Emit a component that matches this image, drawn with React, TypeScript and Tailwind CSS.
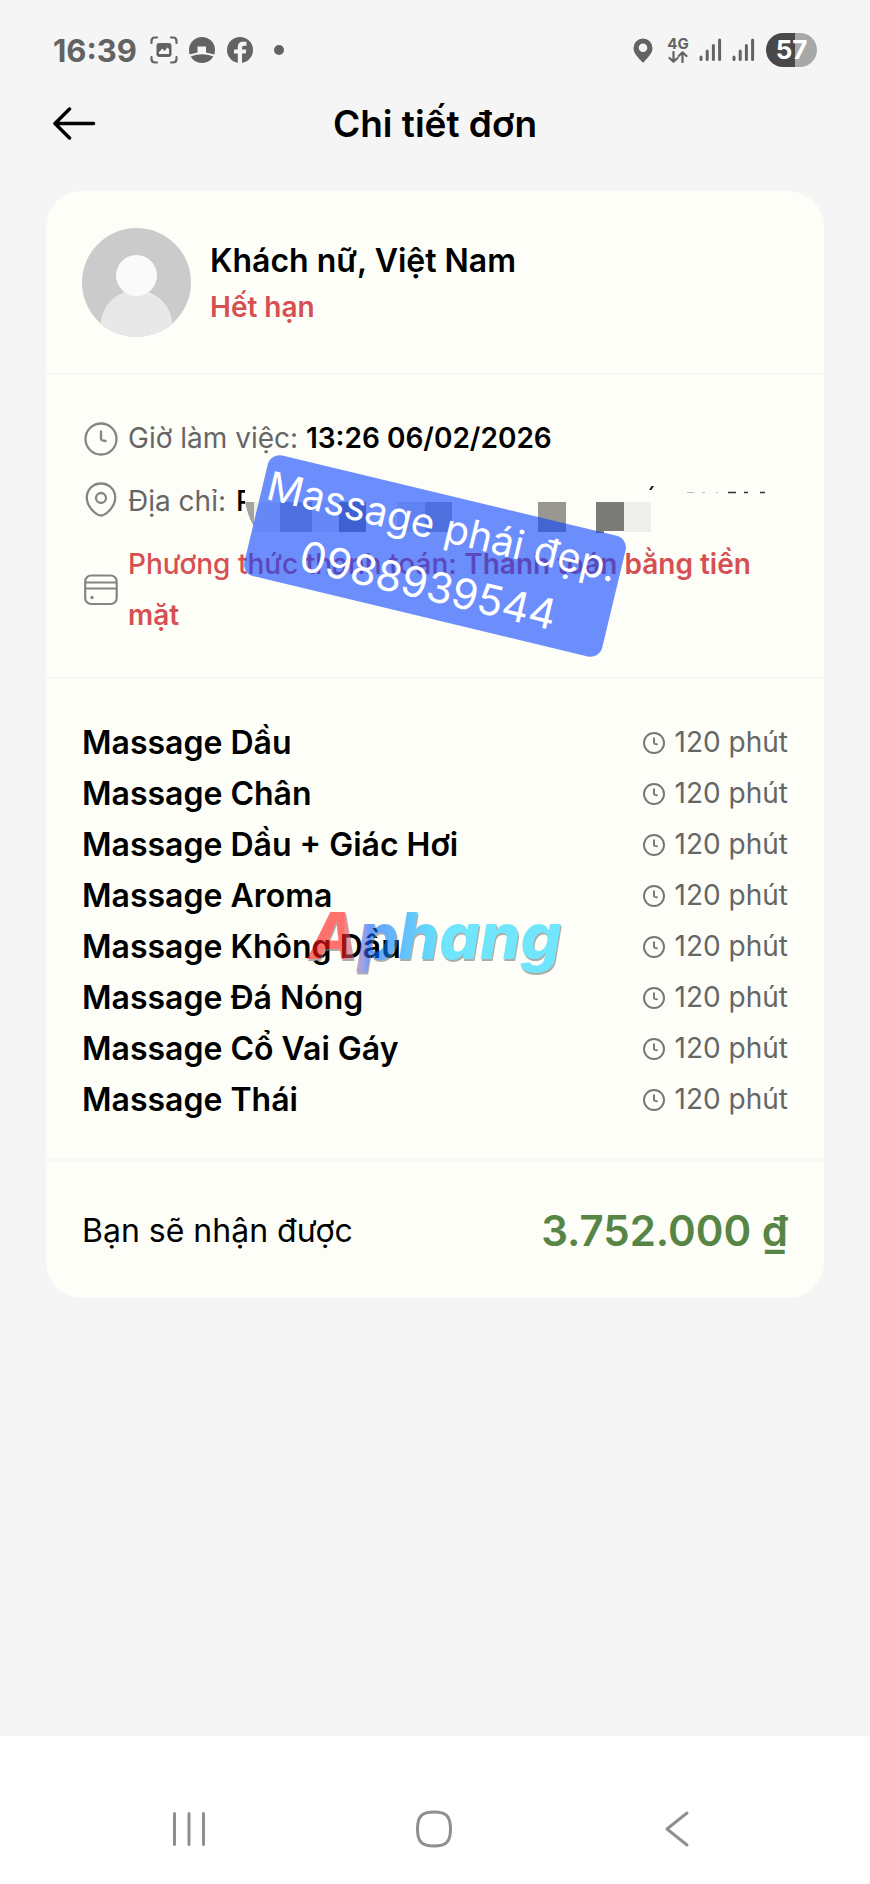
import React from 'react';

type Service = {
  id: number;
  name: string;
  minutes: number;
};

const services: Service[] = [
  { id: 1, name: 'Massage Dầu', minutes: 120 },
  { id: 2, name: 'Massage Chân', minutes: 120 },
  { id: 3, name: 'Massage Dầu + Giác Hơi', minutes: 120 },
  { id: 4, name: 'Massage Aroma', minutes: 120 },
  { id: 5, name: 'Massage Không Dầu', minutes: 120 },
  { id: 6, name: 'Massage Đá Nóng', minutes: 120 },
  { id: 7, name: 'Massage Cổ Vai Gáy', minutes: 120 },
  { id: 8, name: 'Massage Thái', minutes: 120 },
];

function ClockIcon({ className }: { className: string }) {
  return (
    <svg viewBox="0 0 34 34" className={className} fill="none" stroke="currentColor" strokeLinecap="round" strokeLinejoin="round">
      <circle cx="17" cy="17" r="15.5" />
      <path d="M17 9.5V16.5Q17 18 18.5 18.4L21.5 19" />
    </svg>
  );
}

function PinIcon() {
  return (
    <svg viewBox="0 0 34 42" className="h-[42px] w-[34px] shrink-0 text-[#858585]" fill="none" stroke="currentColor" strokeWidth="2.3" strokeLinejoin="round">
      <path d="M17 34.5C13.5 34.5 2.8 27 2.8 16.5C2.8 8.5 9 2.5 17 2.5S31.2 8.5 31.2 16.5C31.2 27 20.5 34.5 17 34.5Z" />
      <circle cx="17" cy="17" r="5" />
    </svg>
  );
}

function CardIcon() {
  return (
    <svg viewBox="0 0 34 34" className="h-[34px] w-[34px] shrink-0 text-[#858585]" fill="none" stroke="currentColor" strokeWidth="2.2">
      <rect x="1.2" y="2.5" width="31.5" height="28.5" rx="6" />
      <path d="M1 9.5H33M1 15.5H33" />
      <circle cx="8" cy="24.5" r="1.7" fill="currentColor" stroke="none" />
    </svg>
  );
}

function SignalIcon() {
  return (
    <svg viewBox="0 0 23 24" className="h-6 w-[23px]" stroke="currentColor" strokeWidth="3" strokeLinecap="round">
      <path d="M2 19V21.5M8.2 13V21.5M14.4 7.5V21.5M20.6 2V21.5" />
    </svg>
  );
}

function StatusBar() {
  return (
    <div className="flex h-[100px] items-center justify-between px-[53px] text-[#636363]">
      <div className="flex items-center">
        <span className="w-[97px] text-[31px] font-bold leading-none">16:39</span>
        <svg viewBox="0 0 28 28" className="h-7 w-7" fill="none" stroke="currentColor" strokeWidth="2.2" strokeLinecap="round">
          <path d="M1.5 7V5Q1.5 1.5 5 1.5H7M21 1.5H23Q26.5 1.5 26.5 5V7M26.5 21V23Q26.5 26.5 23 26.5H21M7 26.5H5Q1.5 26.5 1.5 23V21" />
          <rect x="6.5" y="7" width="15" height="14" rx="3" fill="currentColor" stroke="none" />
          <path d="M9 18V16L12.5 12.5L14.5 15L17.5 11.5L19 13V18Z" fill="#f5f5f5" stroke="none" />
        </svg>
        <svg viewBox="0 0 26 26" className="ml-[11px] h-[26px] w-[26px]">
          <circle cx="13" cy="13" r="13" fill="currentColor" />
          <path d="M0.5 17.5L8.5 15.5V9.5H17V15.5L25.5 17.5L24.5 19.5Q13 15 1.5 19.5Z" fill="#f5f5f5" />
        </svg>
        <svg viewBox="0 0 26 26" className="ml-3 h-[26px] w-[26px]">
          <circle cx="13" cy="13" r="13" fill="currentColor" />
          <path d="M10.8 26V16.5H7V12.5H10.8V10.5C10.8 6.5 12.8 4.8 16 4.8H19.5V8.800H17.3C15.7 8.8 15 9.5 15 11V12.5H19.3L18.7 16.5H15V26Z" fill="#f5f5f5" />
        </svg>
        <span className="ml-[21px] h-[10px] w-[10px] rounded-full bg-[#636363]" />
      </div>
      <div className="flex items-center">
        <svg viewBox="0 0 20 25" className="h-[25px] w-5">
          <path fillRule="evenodd" fill="currentColor" d="M10 0.5A9.5 9.5 0 0 1 19.5 10C19.5 16 14 20 11.2 23.8Q10 25.2 8.8 23.8C6 20 .5 16 .5 10A9.5 9.5 0 0 1 10 .5ZM10 5.5A4.3 4.3 0 1 0 10 14.1A4.3 4.3 0 1 0 10 5.5Z" />
        </svg>
        <div className="ml-[14px] flex w-[22px] flex-col items-center">
          <span className="text-[15px] font-bold leading-[14px]">4G</span>
          <svg viewBox="0 0 20 12" className="h-3 w-5" fill="none" stroke="currentColor" strokeWidth="2.2" strokeLinecap="round" strokeLinejoin="round">
            <path d="M5.5 1V10.5M1.5 7L5.5 10.7L9.5 7M14.5 11V1.5M10.8 5L14.5 1.3L18.5 5" />
          </svg>
        </div>
        <div className="ml-[10px] flex gap-[10px]">
          <SignalIcon />
          <SignalIcon />
        </div>
        <div className="ml-[11px] flex h-[34px] w-[51px] items-center justify-center rounded-full bg-linear-to-r from-[#484848] from-57% to-[#a8a8a8] to-57% text-[26px] font-bold leading-none text-white">
          57
        </div>
      </div>
    </div>
  );
}

// Leftovers of the censored address line
function BlurredAddress() {
  return (
    <svg viewBox="0 0 540 60" className="h-[60px] w-[540px]">
      <rect x="11" y="8" width="24" height="42" fill="#fdfef7" />
      <path d="M11 26H20V50Q15 44 11 26Z" fill="#a3a39f" />
      <rect x="20" y="26" width="26" height="30" fill="#efefea" />
      <rect x="46" y="26" width="32" height="30" fill="#b4b4b0" />
      <rect x="78" y="26" width="27" height="30" fill="#efefea" />
      <rect x="105" y="26" width="27" height="30" fill="#8d8d8a" />
      <rect x="163" y="26" width="28" height="30" fill="#e3e3df" />
      <rect x="191" y="26" width="27" height="30" fill="#b4b4b0" />
      <rect x="304" y="26" width="28" height="30" fill="#989890" />
      <path d="M362 26H390V55H370V57H362Z" fill="#7b7b78" />
      <rect x="390" y="26" width="27" height="30" fill="#eeeeea" />
      <path d="M415 14L417.500 10H420L417.500 14Z" fill="#222" />
      <path d="M494 16.500H502M510 16.500H514M526 16.500H531" stroke="#333" strokeWidth="1.500" />
      <path d="M453 16.500H460M468 16.500H471M482 16.500H484" stroke="#bbb" />
    </svg>
  );
}

export default function App() {
  return (
    <div className="flex min-h-screen flex-col bg-[#f5f5f5] font-['Inter','Noto_Sans',sans-serif] text-black">
      <StatusBar />

      <header className="grid h-[48px] grid-cols-[44px_1fr_44px] items-center px-[52px]">
        <button type="button" aria-label="Quay lại">
          <svg viewBox="0 0 44 34" className="h-[34px] w-11" fill="none" stroke="currentColor" strokeWidth="3.5" strokeLinecap="round" strokeLinejoin="round">
            <path d="M17.5 2L3 16.500L17.5 31M3 16.500H41.5" />
          </svg>
        </button>
        <h1 className="text-center text-[37px] font-semibold leading-[48px]">Chi tiết đơn</h1>
      </header>

      <main className="flex-1 px-[46px] pt-[43px]">
        <div className="relative rounded-[36px] bg-[#fdfef7]">
          {/* Customer */}
          <section className="flex items-center gap-[19px] px-9 pb-9 pt-[37px]">
            <svg viewBox="0 0 109 109" className="h-[109px] w-[109px] shrink-0">
              <clipPath id="avatar">
                <circle cx="54.5" cy="54.5" r="54.5" />
              </clipPath>
              <g clipPath="url(#avatar)">
                <rect width="109" height="109" fill="#cbcbcb" />
                <circle cx="54.5" cy="98" r="36" fill="#e8e8e8" />
                <circle cx="54.5" cy="47.5" r="20.5" fill="#fafafa" />
              </g>
            </svg>
            <div className="pt-0.5">
              <h2 className="text-[32px] font-semibold leading-[48px]">Khách nữ, Việt Nam</h2>
              <p className="text-[28px] font-semibold leading-[45px] text-[#d65053]">Hết hạn</p>
            </div>
          </section>

          {/* Booking info */}
          <section className="relative flex flex-col gap-3 border-t-2 border-[#f5f5f3] px-9 pb-9 pt-[38px] text-[28px] leading-[51px] text-[#666]">
            <div className="flex items-center gap-[10px] pl-0.5">
              <ClockIcon className="h-[34px] w-[34px] shrink-0 stroke-[2.3] text-[#858585]" />
              <p>
                Giờ làm việc: <span className="font-semibold text-black">13:26 06/02/2026</span>
              </p>
            </div>
            <div className="relative flex items-center gap-[10px] pl-0.5">
              <PinIcon />
              <p className="flex gap-[10px]">
                Địa chỉ: <span className="font-medium text-black">P</span>
              </p>
              <div className="absolute left-[152px] top-0">
                <BlurredAddress />
              </div>
            </div>
            <div className="flex items-center gap-[10px] pl-0.5 text-[#d65053]">
              <CardIcon />
              <p className="font-medium">
                Phương thức thanh toán: <span className="font-semibold">Thanh toán bằng tiền mặt</span>
              </p>
            </div>

            <div className="absolute left-1/2 top-[119px] w-[368px] -translate-x-1/2 rotate-[13.5deg] rounded-xl bg-[#0a43ff]/60 pb-0.5 pt-0.5 text-center leading-[60px] text-white">
              <p className="whitespace-nowrap text-[40px]">Massage phái đẹp.</p>
              <p className="text-[42px]">0988939544</p>
            </div>
          </section>

          {/* Services */}
          <section className="relative border-t-2 border-[#f5f5f3] px-9 pb-[33px] pt-[38px]">
            <ul>
              {services.map((s) => (
                <li key={s.id} className="flex items-center justify-between leading-[51px]">
                  <span className="text-[32px] font-semibold">{s.name}</span>
                  <span className="flex items-center gap-[10px] text-[28px] text-[#666]">
                    <ClockIcon className="h-[22px] w-[22px] stroke-[3] text-[#777]" />
                    {s.minutes} phút
                  </span>
                </li>
              ))}
            </ul>
            <div className="absolute left-1/2 top-[217px] -translate-x-1/2 bg-linear-to-r from-[#ff1510] from-17% via-[#0a5aff] via-26% to-[#14d5ff] to-54% bg-clip-text px-3 text-[64px] font-extrabold italic leading-[80px] text-transparent opacity-60 drop-shadow-[1px_2px_0_#777]">
              Aphang
            </div>
          </section>

          {/* Total */}
          <section className="flex items-center justify-between border-t-4 border-[#f7f8f4] px-9 pb-9 pt-[37px]">
            <span className="text-[32px] leading-[63px]">Bạn sẽ nhận được</span>
            <span className="text-[42px] font-semibold leading-[63px] text-[#578545]">3.752.000 ₫</span>
          </section>
        </div>
      </main>

      <nav className="flex h-[148px] items-center justify-between bg-white pl-[169px] pr-[171px] pt-[38px] text-[#8f8f8f]">
        <button type="button" aria-label="Gần đây">
          <svg viewBox="0 0 40 40" className="h-10 w-10" stroke="currentColor" strokeWidth="3" strokeLinecap="round">
            <path d="M5.5 4.5V35.5M20 4.5V35.5M34.5 4.5V35.5" />
          </svg>
        </button>
        <button type="button" aria-label="Trang chủ">
          <svg viewBox="0 0 40 40" className="h-10 w-10" fill="none" stroke="currentColor" strokeWidth="3">
            <path d="M20 3C32 3 36.5 7 36.5 20S32 37 20 37S3.5 33 3.5 20S8 3 20 3Z" />
          </svg>
        </button>
        <button type="button" aria-label="Trở về">
          <svg viewBox="0 0 40 40" className="h-10 w-10" fill="none" stroke="currentColor" strokeWidth="3" strokeLinecap="round" strokeLinejoin="round">
            <path d="M28 4L8 20L28 36" />
          </svg>
        </button>
      </nav>
    </div>
  );
}
